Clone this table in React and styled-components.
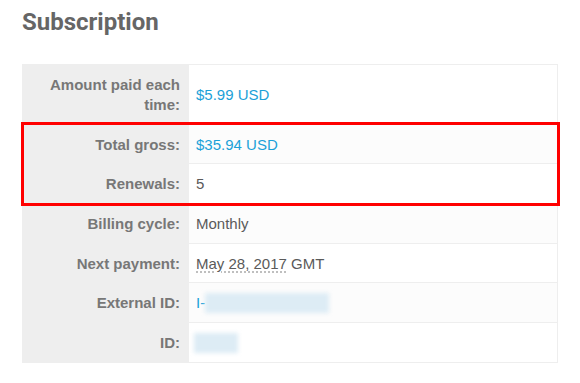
import React from 'react'
import styled, { createGlobalStyle } from 'styled-components'

const GlobalStyle = createGlobalStyle`
  body {
    margin: 0;
    background: #fff;
    font-family: "Liberation Sans", Arial, sans-serif;
  }
`

const Page = styled.div`
  padding: 6px 22px 0 22px;
  width: 536px;
`

const Title = styled.h2`
  margin: 0 0 26px 0;
  font-family: Roboto, "Liberation Sans", sans-serif;
  font-weight: 700;
  font-size: 24px;
  line-height: 32px;
  color: #666;
`

const TableWrap = styled.div`
  position: relative;
`

const Table = styled.div`
  display: grid;
  grid-template-columns: 167px 1fr;
  border: 1px solid #eee;
  border-left: none;
`

const Label = styled.div`
  background: #eee;
  padding: 10px 9px 8.7px 0;
  text-align: right;
  font-weight: 700;
  font-size: 15px;
  line-height: 20px;
  color: #777;
  border-top: ${({ first }) => (first ? 'none' : '1px solid #eee')};
`

const Value = styled.div`
  background: ${({ odd }) => (odd ? '#fcfcfc' : '#fff')};
  padding: ${({ first }) => (first ? '20px 8px 18.7px 7px' : '10px 8px 8.7px 7px')};
  font-size: 15px;
  line-height: 20px;
  height: 20px;
  color: ${({ link }) => (link ? '#1ba1d8' : '#5a5a5a')};
  border-top: ${({ first }) => (first ? 'none' : '1px solid #eee')};
  white-space: nowrap;
`

const Abbr = styled.span`
  text-decoration: underline dotted #aaa;
  text-underline-offset: 3px;
`

const Blur = styled.span`
  display: inline-block;
  vertical-align: top;
  width: ${({ w }) => w}px;
  height: 20px;
  background: #ddecf5;
  filter: blur(2px);
  margin-left: ${({ ml }) => ml || 0}px;
`

const Highlight = styled.div`
  position: absolute;
  left: -1px;
  right: -2px;
  top: 58px;
  height: 78px;
  border: 3px solid #ff0000;
`

const rows = [
  { label: <>Amount paid each<br />time:</>, value: '$5.99 USD', link: true },
  { label: 'Total gross:', value: '$35.94 USD', link: true },
  { label: 'Renewals:', value: '5' },
  { label: 'Billing cycle:', value: 'Monthly' },
  { label: 'Next payment:', value: <><Abbr>May 28, 2017</Abbr> GMT</> },
  { label: 'External ID:', value: <>I-<Blur w={124} /></>, link: true },
  { label: 'ID:', value: <Blur w={44} ml={-2} /> },
]

export default function App() {
  return (
    <>
      <GlobalStyle />
      <Page>
        <Title>Subscription</Title>
        <TableWrap>
          <Table>
            {rows.map((r, i) => (
              <React.Fragment key={i}>
                <Label first={i === 0}>{r.label}</Label>
                <Value first={i === 0} odd={i % 2 === 1} link={r.link}>{r.value}</Value>
              </React.Fragment>
            ))}
          </Table>
          <Highlight />
        </TableWrap>
      </Page>
    </>
  )
}
